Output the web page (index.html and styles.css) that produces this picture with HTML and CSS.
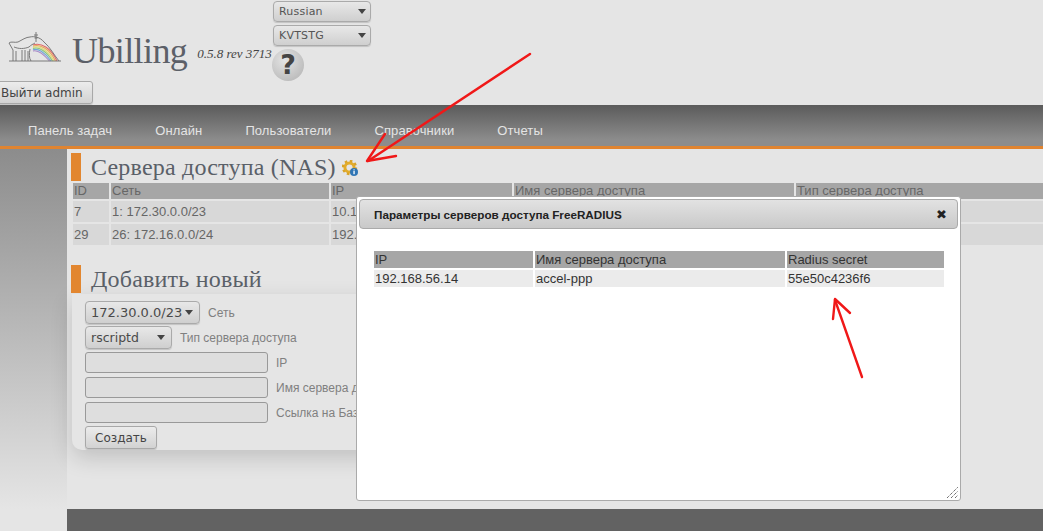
FILE: index.html
```html
<!DOCTYPE html>
<html lang="ru">
<head>
<meta charset="utf-8">
<title>Ubilling</title>
<link rel="stylesheet" href="styles.css">
</head>
<body>
<div class="page">
  <header class="header">
    <div class="brand-row">
      <div class="brand">
        <svg class="logo" width="54" height="32" viewBox="0 0 54 32" aria-hidden="true">
          <g fill="none" stroke-width="1.1">
            <path d="M25 15 C33 12 43 18 49 31" stroke="#e06a6a"/>
            <path d="M25 16.2 C32 13.5 41.5 19 47.5 31" stroke="#e8a958"/>
            <path d="M25 17.4 C31 15 40 20 46 31" stroke="#e6dc70"/>
            <path d="M25 18.6 C30.5 16.5 38.5 21 44.5 31" stroke="#8cc878"/>
            <path d="M25 19.8 C30 18 37 22.5 43 31" stroke="#70a8d8"/>
            <path d="M25 21 C29.5 19.5 35.5 24 41.5 31" stroke="#a888c8"/>
          </g>
          <g fill="none" stroke="#6e6e6e" stroke-width="0.9">
            <path d="M28 2 V12 M26 5 H30 M26.5 8 H29.5"/>
            <path d="M1 13 C3 11 7 13 10 12 C14 10 18 7 22 7 C26 6 32 7 36 12 C42 17 46 25 51 31"/>
            <path d="M1 13 L5 20 L5 31 M8 21 V31 M14 20 V31 M17 20 V31 M20 21 V31"/>
            <path d="M6 17 C11 19 16 19 21 17 C23 15 25 14 27 13"/>
            <path d="M22 19 C21 24 21 28 23 31"/>
            <path d="M1 31 H53"/>
          </g>
        </svg>
        <span class="brand-name">Ubilling</span>
        <span class="brand-version">0.5.8 rev 3713</span>
      </div>
      <div class="switchers">
        <div class="select select-top"><span>Russian</span><i class="caret"></i></div>
        <div class="select select-top"><span>KVTSTG</span><i class="caret"></i></div>
        <div class="help">?</div>
      </div>
    </div>
    <button class="btn logout" type="button">Выйти admin</button>
  </header>

  <nav class="nav">
    <a>Панель задач</a>
    <a>Онлайн</a>
    <a>Пользователи</a>
    <a>Справочники</a>
    <a>Отчеты</a>
  </nav>

  <div class="body-row">
    <aside class="sidebar"></aside>
    <main class="main">
      <div class="content">
        <h2 class="title">
          <span class="title-bar"></span>
          <span>Сервера доступа (NAS)</span>
          <svg class="gear" width="17" height="17" viewBox="0 0 17 17" aria-hidden="true">
            <circle cx="7.5" cy="7.5" r="4.6" fill="none" stroke="#e2ac2c" stroke-width="3"/>
            <circle cx="7.5" cy="7.5" r="6.6" fill="none" stroke="#d9a225" stroke-width="2.2" stroke-dasharray="2.6 2.6"/>
            <circle cx="12" cy="12" r="4" fill="#2f75b5"/>
            <rect x="11.4" y="11" width="1.3" height="3.2" fill="#fff"/>
            <rect x="11.4" y="9.4" width="1.3" height="1" fill="#fff"/>
          </svg>
        </h2>
        <table class="grid nas-table">
          <thead>
            <tr><th>ID</th><th>Сеть</th><th>IP</th><th>Имя сервера доступа</th><th>Тип сервера доступа</th></tr>
          </thead>
          <tbody>
            <tr><td>7</td><td>1: 172.30.0.0/23</td><td>10.1.0.1</td><td>nas-1</td><td>rscriptd</td></tr>
            <tr><td>29</td><td>26: 172.16.0.0/24</td><td>192.168.56.14</td><td>accel-ppp</td><td>FreeRADIUS</td></tr>
          </tbody>
        </table>

        <h2 class="title title-second">
          <span class="title-bar"></span>
          <span>Добавить новый</span>
        </h2>
        <form class="add-form">
          <div class="form-row"><div class="select select-form select-net"><span>172.30.0.0/23</span><i class="caret"></i></div><label>Сеть</label></div>
          <div class="form-row"><div class="select select-form select-type"><span>rscriptd</span><i class="caret"></i></div><label>Тип сервера доступа</label></div>
          <div class="form-row"><input class="field" type="text"><label>IP</label></div>
          <div class="form-row"><input class="field" type="text"><label>Имя сервера доступа</label></div>
          <div class="form-row"><input class="field" type="text"><label>Ссылка на Базу</label></div>
          <button class="btn submit" type="button">Создать</button>
        </form>
      </div>
      <footer class="footer"></footer>
    </main>
  </div>

  <section class="modal">
    <div class="modal-bar">
      <span class="modal-title">Параметры серверов доступа FreeRADIUS</span>
      <span class="modal-close">✖</span>
    </div>
    <table class="grid radius-table">
      <thead><tr><th>IP</th><th>Имя сервера доступа</th><th>Radius secret</th></tr></thead>
      <tbody><tr><td>192.168.56.14</td><td>accel-ppp</td><td>55e50c4236f6</td></tr></tbody>
    </table>
    <svg class="grip" width="13" height="13" viewBox="0 0 13 13" aria-hidden="true">
      <path d="M1 12 L12 1 M5 12 L12 5 M9 12 L12 9" stroke="#333" stroke-width="1" stroke-dasharray="1 1" fill="none"/>
    </svg>
  </section>

  <svg class="arrows" width="1043" height="531" viewBox="0 0 1043 531" aria-hidden="true">
    <g fill="none" stroke="#f01818" stroke-width="2.4" stroke-linecap="round" stroke-linejoin="round">
      <path d="M530 54 L368 161"/>
      <path d="M385 134 L367 161 L396 156"/>
      <path d="M862 377 L835 300"/>
      <path d="M833 319 L835 299 L850 313"/>
    </g>
  </svg>
</div>
</body>
</html>
```
FILE: styles.css
```css
* { box-sizing: border-box; }
html, body { margin: 0; padding: 0; }
body { font-family: "Liberation Sans", Arial, sans-serif; color: #666; background: #e5e5e5; }
.page { position: relative; width: 1043px; height: 531px; overflow: hidden; background: #e5e5e5; }

.header { height: 105px; padding-top: 1px; }
.brand-row { display: flex; align-items: flex-start; height: 80px; }
.brand { display: flex; align-items: flex-start; width: 273px; padding: 29px 0 0 8px; }
.logo { flex: none; }
.brand-name { margin-left: 10px; font: 36px/42px "Liberation Serif", serif; color: #5c6068; letter-spacing: -0.6px; }
.brand-version { margin: 16px 0 0 10px; font: italic 13px/16px "Liberation Serif", serif; color: #444; white-space: nowrap; }
.switchers { display: flex; flex-direction: column; gap: 3px; }

.select { display: flex; align-items: center; justify-content: space-between; border: 1px solid #aaa; border-radius: 4px; background: linear-gradient(#e8e8e8, #cfcfcf); box-shadow: 0 1px 1px rgba(0,0,0,.15); font-family: "DejaVu Sans", sans-serif; color: #555; }
.select-top { width: 98px; height: 21px; padding: 0 4px 0 5px; font-size: 11px; letter-spacing: .2px; }
.select-form { height: 23px; padding: 0 6px 0 5px; font-size: 13px; color: #4a4a4a; }
.select-net { width: 115px; }
.select-type { width: 87px; font-size: 12.5px; }
.caret { width: 0; height: 0; border-left: 4.5px solid transparent; border-right: 4.5px solid transparent; border-top: 5px solid #444; }

.help { width: 32px; height: 32px; margin: 0 0 0 -1px; border-radius: 50%; background: radial-gradient(circle at 40% 35%, #e4e4e4, #b0b0b0); color: #444; font: bold 27px/32px "DejaVu Sans", sans-serif; text-align: center; }

.btn { display: block; border: 1px solid #a8a8a8; border-radius: 3px; background: linear-gradient(#ececec, #d2d2d2); box-shadow: 0 1px 1px rgba(0,0,0,.15); font-family: "DejaVu Sans", sans-serif; font-size: 12px; color: #444; padding: 0; }
.logout { width: 103px; height: 23px; margin-left: -10px; padding-left: 10px; text-align: left; }

.nav { display: flex; gap: 43px; align-items: flex-start; height: 44px; padding: 18px 0 0 28px; background: linear-gradient(#5b5b5b, #8c8c8c 85%); border-bottom: 3px solid #e08430; font-size: 13px; color: #e4e4e4; letter-spacing: .1px; }
.nav a { display: block; }

.body-row { display: flex; height: 382px; }
.sidebar { width: 67px; flex: none; height: 360px; background: linear-gradient(#8c8c8c, #e5e5e5); }
.main { flex: 1; min-width: 0; display: flex; flex-direction: column; }
.content { flex: 1; min-height: 0; padding: 4px 0 0 4px; }
.footer { height: 22px; background: #626262; }

.title { display: flex; align-items: center; gap: 10px; height: 28px; margin: 0; font: normal 24px/28px "Liberation Serif", serif; color: #5a6068; letter-spacing: .2px; }
.title-bar { width: 10px; height: 28px; background: #e2862f; flex: none; }
.title-second { margin-top: 18px; }
.gear { margin: 2px 0 0 -4px; }

.grid { border-collapse: separate; border-spacing: 2px; table-layout: fixed; font-size: 13px; }
.grid th { background: #a6a6a6; font-weight: normal; text-align: left; padding: 0 1px; height: 16px; line-height: 16px; overflow: hidden; white-space: nowrap; }
.grid td { padding: 0 1px; overflow: hidden; white-space: nowrap; }

.nas-table { width: 1000px; margin: 0; color: #666; }
.nas-table th:nth-child(1) { width: 36px; }
.nas-table th:nth-child(2) { width: 218px; }
.nas-table th:nth-child(3) { width: 181px; }
.nas-table th:nth-child(4) { width: 280px; }
.nas-table td { background: #d8d8d8; height: 21px; }

.add-form { width: 640px; height: 156px; margin: 1px 0 0 1px; padding: 7px 0 0 13px; background: #e5e5e5; border-radius: 0 0 0 10px; box-shadow: 0 8px 22px rgba(0,0,0,.16); overflow: hidden; }
.form-row { display: flex; align-items: center; gap: 5px; height: 23px; margin-bottom: 2px; font-size: 12px; white-space: nowrap; color: #808080; }
.form-row label { margin-left: 3px; }
.field { width: 183px; height: 21px; border: 1px solid #999; border-radius: 3px; background: #dedede; padding: 0; }
.form-row .field + label { margin-left: 3px; }
.submit { width: 72px; height: 23px; text-align: center; margin-top: 0; }

.modal { position: absolute; left: 356px; top: 196px; width: 605px; height: 305px; padding: 2px; background: #fff; border: 1px solid #aaa; border-radius: 3px; }
.modal-bar { display: flex; align-items: center; justify-content: space-between; height: 30px; padding: 0 10px 0 14px; border: 1px solid #aaa; border-radius: 4px; background: linear-gradient(#e2e2e2, #c9c9c9); }
.modal-title { font-weight: bold; font-size: 11.7px; color: #222; }
.modal-close { font-size: 13px; color: #222; font-family: "DejaVu Sans", sans-serif; }
.radius-table { width: 574px; margin: 20px 0 0 13px; color: #333; }
.radius-table th:nth-child(1) { width: 159px; }
.radius-table th:nth-child(2) { width: 250px; }
.radius-table th { height: 17px; }
.radius-table td { background: #ebebeb; height: 17px; line-height: 17px; }
.grip { position: absolute; right: 1px; bottom: 1px; }

.arrows { position: absolute; left: 0; top: 0; pointer-events: none; }
```
